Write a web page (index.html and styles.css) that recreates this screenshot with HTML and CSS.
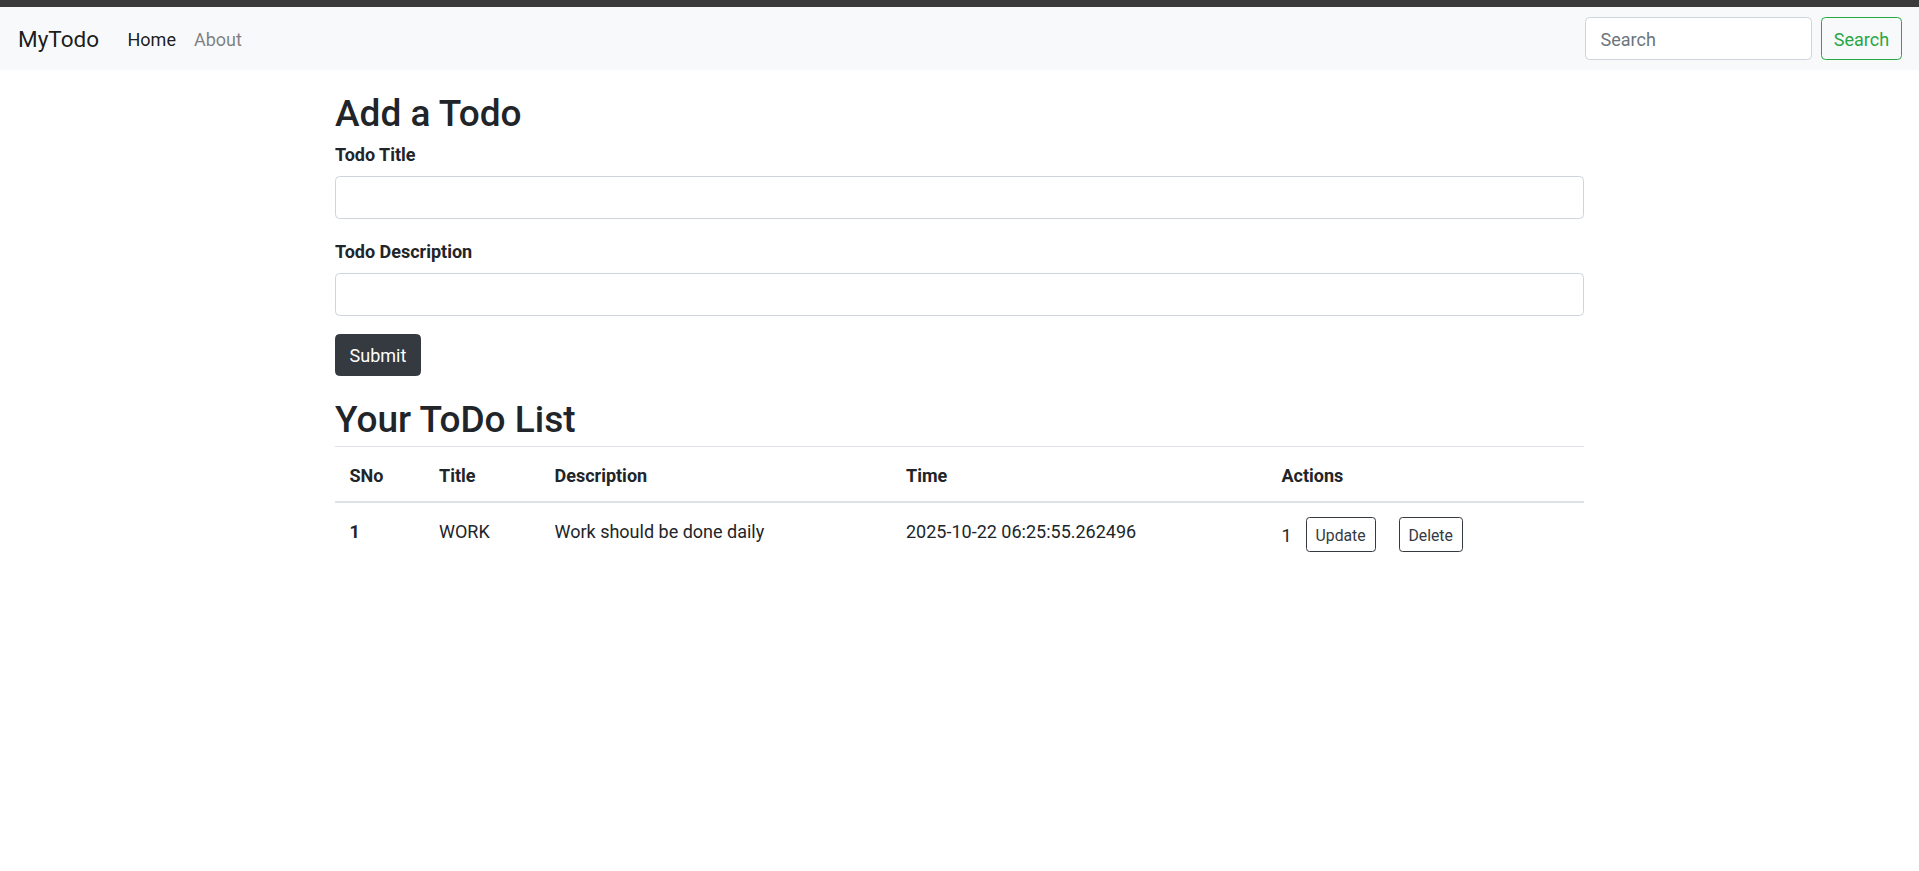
FILE: index.html
```html
<!DOCTYPE html>
<html lang="en">
<head>
<meta charset="utf-8">
<title>MyTodo</title>
<link rel="stylesheet" href="styles.css">
</head>
<body>
<div class="topbar"></div>
<nav class="navbar">
  <div class="nav-left">
    <a class="brand" href="#">MyTodo</a>
    <ul class="nav-links">
      <li><a class="nav-link active" href="#">Home</a></li>
      <li><a class="nav-link" href="#">About</a></li>
    </ul>
  </div>
  <form class="search-form">
    <input class="search-input" type="search" placeholder="Search">
    <button class="btn-search" type="button">Search</button>
  </form>
</nav>

<main class="container">
  <h2 class="heading">Add a Todo</h2>
  <form class="todo-form">
    <div class="form-group">
      <label class="form-label" for="title">Todo Title</label>
      <input class="form-control" type="text" id="title">
    </div>
    <div class="form-group">
      <label class="form-label" for="desc">Todo Description</label>
      <input class="form-control" type="text" id="desc">
    </div>
    <button class="btn-dark" type="button">Submit</button>
  </form>

  <h2 class="heading list-heading">Your ToDo List</h2>
  <table class="table">
    <thead>
      <tr>
        <th class="col-sno">SNo</th>
        <th class="col-title">Title</th>
        <th class="col-desc">Description</th>
        <th class="col-time">Time</th>
        <th class="col-actions">Actions</th>
      </tr>
    </thead>
    <tbody>
      <tr>
        <th>1</th>
        <td>WORK</td>
        <td>Work should be done daily</td>
        <td>2025-10-22 06:25:55.262496</td>
        <td><span class="row-num">1</span><button class="btn-sm btn-update" type="button">Update</button><button class="btn-sm btn-delete" type="button">Delete</button></td>
      </tr>
    </tbody>
  </table>
</main>
</body>
</html>
```
FILE: styles.css
```css
* { box-sizing: border-box; }

html, body {
  margin: 0;
  padding: 0;
}

body {
  font-family: Roboto, "Liberation Sans", Arial, sans-serif;
  font-size: 18px;
  line-height: 27px;
  color: #212529;
  background: #ffffff;
}

.topbar {
  height: 7px;
  background: #3b3b3b;
}

/* Navbar */
.navbar {
  display: flex;
  align-items: center;
  justify-content: space-between;
  padding: 9px 17px 9px 18px;
  background: #f8f9fa;
}

.nav-left {
  display: flex;
  align-items: center;
}

.brand {
  font-size: 22.5px;
  line-height: 33.75px;
  padding: 6.6px 0 4.6px;
  margin-right: 19.5px;
  color: rgba(0, 0, 0, 0.9);
  text-decoration: none;
}

.nav-links {
  display: flex;
  list-style: none;
  margin: 0;
  padding: 0;
}

.nav-link {
  display: block;
  padding: 10px 9px 8px;
  color: rgba(0, 0, 0, 0.5);
  text-decoration: none;
}

.nav-link.active {
  color: rgba(0, 0, 0, 0.9);
}

.search-form {
  display: flex;
  align-items: center;
}

.search-input {
  width: 227px;
  height: 43px;
  padding: 7.75px 13.5px 5.75px 14.5px;
  margin-right: 9px;
  font: inherit;
  color: #495057;
  background: #fff;
  border: 1px solid #ced4da;
  border-radius: 4.5px;
}

.search-input::placeholder {
  color: #6c757d;
}

.btn-search {
  width: 81px;
  height: 43px;
  padding: 7.75px 0 5.75px;
  font: inherit;
  color: #28a745;
  background: transparent;
  border: 1px solid #28a745;
  border-radius: 4.5px;
}

/* Main */
.container {
  width: 1249px;
  margin: 18px auto 0;
}

.heading {
  margin: 0 0 5.5px;
  padding-top: 3.5px;
  font-size: 37px;
  line-height: 43.2px;
  font-weight: 500;
}

.list-heading {
  margin-top: 18px;
}

.form-group {
  margin-bottom: 18px;
}

.form-label {
  display: inline-block;
  padding-top: 1px;
  margin-bottom: 8px;
  font-weight: 700;
}

.form-control {
  display: block;
  width: 100%;
  height: 42.75px;
  padding: 6.75px 13.5px;
  font: inherit;
  color: #495057;
  background: #fff;
  border: 1px solid #ced4da;
  border-radius: 4.5px;
}

.btn-dark {
  display: inline-block;
  width: 86px;
  padding: 7.75px 0 5.75px;
  font: inherit;
  line-height: 27px;
  color: #fff;
  background: #343a40;
  border: 1px solid #343a40;
  border-radius: 4.5px;
}

/* Table */
.table {
  width: 100%;
  border-collapse: collapse;
  margin-bottom: 18px;
}

.table th,
.table td {
  padding: 14.5px 12.5px 12.5px 14.5px;
  text-align: left;
  vertical-align: top;
  border-top: 1px solid #dee2e6;
}

.table th {
  font-weight: 700;
}

.table td {
  font-weight: 400;
}

.table thead th {
  vertical-align: bottom;
  border-bottom: 2px solid #dee2e6;
}

.table tbody td:last-child {
  padding-top: 13.5px;
  padding-bottom: 13.5px;
}

.col-sno { width: 89.5px; }
.col-title { width: 115.5px; }
.col-desc { width: 351.5px; }
.col-time { width: 375.5px; }
.col-actions { width: 317px; }

.row-num {
  position: relative;
  top: 1px;
}

.btn-sm {
  display: inline-block;
  height: 35px;
  padding: 5.5px 0 3.5px;
  font: inherit;
  font-size: 15.75px;
  line-height: 23.6px;
  color: #343a40;
  background: transparent;
  border: 1px solid #343a40;
  border-radius: 3.6px;
  vertical-align: baseline;
}

.btn-update {
  width: 70px;
  margin-left: 14px;
}

.btn-delete {
  width: 64px;
  margin-left: 23px;
}
```
